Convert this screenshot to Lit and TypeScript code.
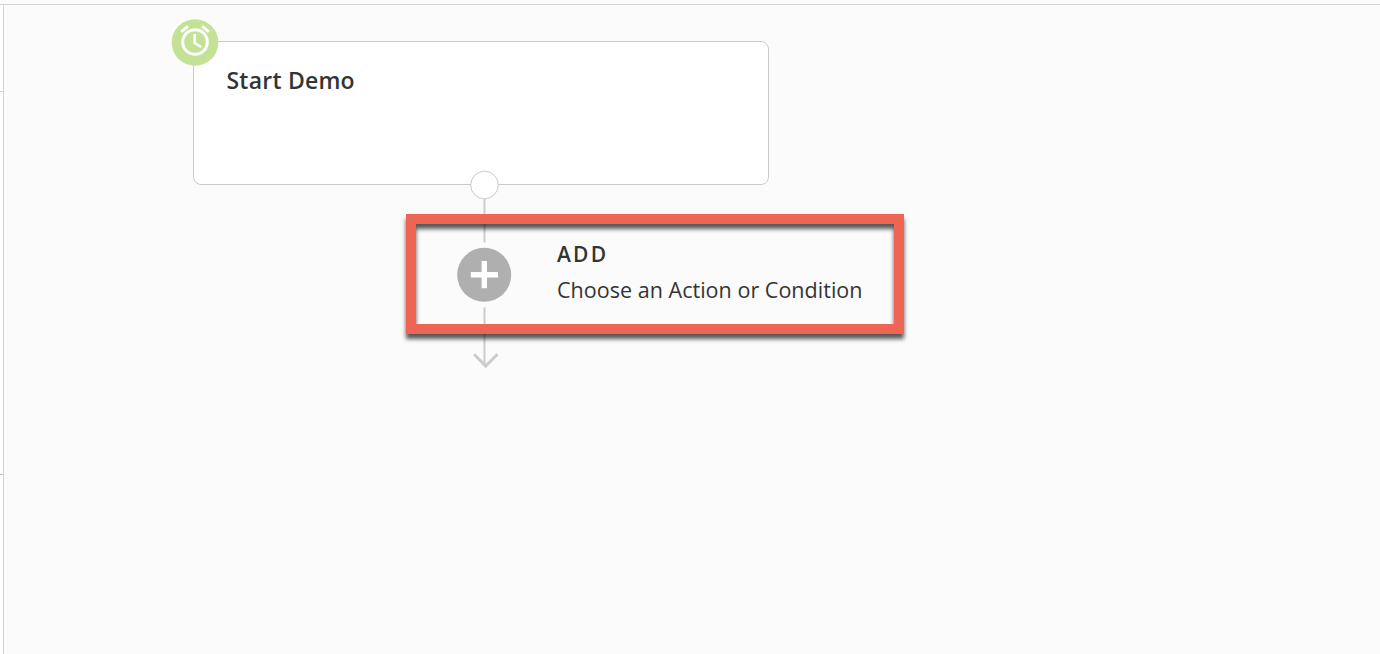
import { LitElement, html, css, svg } from "lit";
import { customElement } from "lit/decorators.js";

@customElement("app-root")
export class AppRoot extends LitElement {
  static styles = css`
    :host { display: block; width: 1380px; height: 654px; overflow: hidden; font-family: "Open Sans", "Noto Sans", sans-serif; color: #333435; }
    .canvas { position: relative; box-sizing: border-box; width: 1380px; height: 654px; background: #fbfbfb; }
    .edges, .frame { position: absolute; left: 0; top: 0; display: block; }
    .card { position: absolute; box-sizing: border-box; left: 193px; top: 41px; width: 576px; height: 144px; padding: 21px 32.5px; border: 1px solid #cacaca; border-radius: 8px; background: #fff; }
    .title { font-size: 23px; line-height: 34px; font-weight: 600; letter-spacing: .22px; white-space: nowrap; }
    .add { position: absolute; left: 557px; top: 238px; display: flex; flex-direction: column; gap: 4px; white-space: nowrap; }
    .label { font-size: 21px; line-height: 32px; font-weight: 600; letter-spacing: 2.2px; }
    .hint { font-size: 21.5px; line-height: 32px; letter-spacing: .03px; }
  `;
  render() {
    return html`<main class="canvas">
      <section class="card"><div class="title">Start Demo</div></section>
      <svg class="edges" width="1380" height="654" viewBox="0 0 1380 654" fill="none">
        ${svg`<path d="M0 5H3V654H0Z" fill="#fff"/>
        <path d="M0 4.500H1380M3.500 5V654M0 91.500H3" stroke="#d4d4d4"/>
        <path d="M0 474.500H3" stroke="#bcbcbc"/>
        <path d="M484.500 199V242.500M484.500 307.500V365" stroke="#ccc" stroke-width="2"/>
        <path d="M474 354.200L485.700 366.100L497.500 354.200" stroke="#ccc" stroke-width="3"/>
        <circle cx="484.500" cy="185" r="13.800" fill="#fff" stroke="#cacaca"/>
        <circle cx="484.200" cy="274.800" r="27" fill="#afafaf"/>
        <path d="M470.800 274.700H498M484.300 261V288.300" stroke="#fff" stroke-width="5.400"/>
        <circle cx="195" cy="42.500" r="23.300" fill="#c3e296"/>
        <g stroke="#fff"><circle cx="195" cy="42" r="12.300" stroke-width="3"/><path d="M194.700 34V43L201.200 47" stroke-width="2.600"/><path d="M181.200 31.800L188 26.200M202 26.200L208.900 31.800" stroke-width="3"/></g>`}
      </svg>
      <section class="add"><div class="label">ADD</div><div class="hint">Choose an Action or Condition</div></section>
      <svg class="frame" width="1380" height="654" viewBox="0 0 1380 654" fill="none">
        <defs><filter id="shade" color-interpolation-filters="sRGB" x="-10%" y="-20%" width="120%" height="150%"><feDropShadow dx="0" dy="5" stdDeviation="2" flood-color="#000" flood-opacity=".65"/></filter></defs>
        <rect x="411" y="219" width="488" height="110" stroke="#ee6553" stroke-width="10" filter="url(#shade)"/>
      </svg>
    </main>`;
  }
}
